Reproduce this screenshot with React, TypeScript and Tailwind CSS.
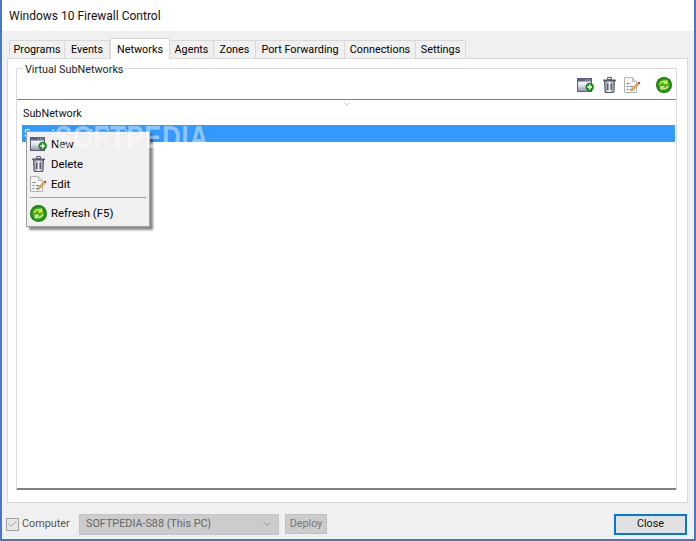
import { useId } from "react";
import { ChevronDown, Check } from "lucide-react";

const font = "font-['Roboto',sans-serif]";

function NewIcon({ className }: { className?: string }) {
  const id = useId();
  return (
    <svg viewBox="0 0 17 16" className={className}>
      <defs>
        <linearGradient id={id} x1="0" y1="0" x2="0" y2="1">
          <stop offset="0" stopColor="#ffffff" />
          <stop offset="0.5" stopColor="#e6e6ee" />
          <stop offset="1" stopColor="#8c8cb0" />
        </linearGradient>
      </defs>
      <rect x="0.5" y="1.5" width="14" height="13" fill={`url(#${id})`} stroke="#5c5c7c" />
      <rect x="1" y="2" width="13" height="2.5" fill="#5c6280" />
      <path d="M8 3h1M10 3h1M12 3h1" stroke="#c8cce0" />
      <circle cx="12.700" cy="10" r="4.200" fill="#128a12" />
      <path d="M12.700 7.600v4.800M10.300 10h4.800" stroke="#fff" strokeWidth="1.700" />
    </svg>
  );
}

function TrashIcon({ className }: { className?: string }) {
  const id = useId();
  return (
    <svg viewBox="0 0 13 16" className={className}>
      <defs>
        <linearGradient id={id} x1="0" y1="0" x2="1" y2="0">
          <stop offset="0" stopColor="#8a8a9a" />
          <stop offset="0.5" stopColor="#f0f0f4" />
          <stop offset="1" stopColor="#8a8a9a" />
        </linearGradient>
      </defs>
      <path d="M4.500 .5h4v2h-4z" fill="none" stroke="#5a5a70" />
      <rect x="0" y="2.500" width="13" height="1.500" fill="#5a5a70" />
      <path d="M1.500 4h10l-.6 11.500h-8.800z" fill={`url(#${id})`} stroke="#5a5a70" />
      <path d="M4.700 6.500v6.500M8.300 6.500v6.500" stroke="#5a5a70" strokeWidth="1.500" />
    </svg>
  );
}

function EditIcon({ className }: { className?: string }) {
  return (
    <svg viewBox="0 0 17 16" className={className}>
      <path d="M.5.5h8l4 4v11h-12z" fill="#f6f6f6" stroke="#b4b4b4" />
      <path d="M8.500.5v4h4" fill="#e4e4e4" stroke="#b4b4b4" />
      <path d="M2.500 6.500h3M2.500 9.500h2M2.500 12.500h2M6 9.500h3M6 12.500h1" stroke="#77778a" />
      <path d="M7 14l1-2.500 5-5 1.500 1.500-5 5z" fill="#e8b04a" stroke="#9a6a2a" strokeWidth=".5" />
      <path d="M13.500 6l1.500-1.500 1.500 1.500-1.500 1.500z" fill="#c02828" />
    </svg>
  );
}

function RefreshIcon({ className }: { className?: string }) {
  const id = useId();
  return (
    <svg viewBox="0 0 16 16" className={className}>
      <defs>
        <radialGradient id={id}>
          <stop offset="0" stopColor="#4fb81e" />
          <stop offset="0.7" stopColor="#33a018" />
          <stop offset="1" stopColor="#0f6e14" />
        </radialGradient>
      </defs>
      <circle cx="8" cy="8" r="8" fill={`url(#${id})`} />
      <path d="M3.200 7.500C3.600 4.500 7 2.700 10 3.800l1.300-1.300.5 4.800-4.600-.5 1.300-1.300C6.500 4.800 5 5.800 4.800 7.500z" fill="#dcec4a" />
      <path d="M12.800 8.500c-.4 3-3.800 4.800-6.800 3.700l-1.300 1.300-.5-4.800 4.600.5-1.300 1.300c1.800.7 3.300-.3 3.500-2z" fill="#cfe98a" />
    </svg>
  );
}

const tabs = ["Programs", "Events", "Networks", "Agents", "Zones", "Port Forwarding", "Connections", "Settings"];
const tabWidths: Record<string, string> = {
  Programs: "w-[56px]",
  Events: "w-[45px]",
  Networks: "w-[60px]",
  Agents: "w-[44px]",
  Zones: "w-[42px]",
  "Port Forwarding": "w-[89px]",
  Connections: "w-[71px]",
  Settings: "w-[50px]",
};

export default function App() {
  return (
    <div className={`${font} w-[696px] h-[541px] flex flex-col overflow-hidden bg-[#f0f0f0] border-x-2 border-b-2 border-[#4a78c0] text-[10.8px] text-black`}>
      <div className="h-[31px] -mx-[2px] px-[9px] bg-white flex items-center text-[12px] text-[#111]">Windows 10 Firewall Control</div>

      <div className="ml-[5px] mr-[6px] mt-[7px] flex-1 flex flex-col min-h-0">
        <div className="flex items-end h-[20px] pl-[2px]">
          {tabs.map((t) => (
            t === "Networks" ? (
              <div key={t} className={`${tabWidths[t]} h-[21px] -mb-px relative z-10 bg-white border border-b-0 border-[#d9d9d9] flex justify-center pt-[3px]`}>{t}</div>
            ) : (
              <div key={t} className={`${tabWidths[t]} h-[18px] pt-[2px] bg-[#f0f0f0] border border-l-0 first:border-l border-b-0 border-[#d9d9d9] flex items-center justify-center`}>{t}</div>
            )
          ))}
        </div>

        <div className="h-[445px] bg-white border border-[#d9d9d9] pt-[9px] pb-[12px] pl-[8px] pr-[10px] flex flex-col">
          <div className="relative flex-1 flex flex-col border-l border-r border-t border-[#d9d9d9]">
            <div className="absolute -top-[7px] left-[6px] bg-white px-[2px] pt-[1px] leading-[14px] text-[#222]">Virtual SubNetworks</div>
            <div className="h-[30px] flex items-end justify-end gap-[9px] pr-[4px] pb-[6px] shrink-0">
              <NewIcon className="w-[17px] h-[16px]" />
              <TrashIcon className="w-[13px] h-[16px]" />
              <EditIcon className="w-[17px] h-[16px] -ml-px" />
              <RefreshIcon className="w-[16px] h-[16px] ml-[6px]" />
            </div>
            <div className="relative flex-1 border-t border-b-2 border-[#808080] pl-[5px] pr-px flex flex-col">
              <ChevronDown className="absolute left-[323px] -top-[1px] w-[14px] h-[10px] text-[#888]" strokeWidth={1.2} />
              <div className="h-[25px] flex items-center pl-[1px] pt-[4px] text-[#111]">SubNetwork</div>
              <div className="h-[17px] bg-[#3399ff] border border-dotted border-[#c08040] text-white leading-[15px] pl-px">Sample virtual subnet</div>
              <div className="absolute top-[31px] left-[9px] w-[124px] h-[96px] bg-[#f0f0f0] border border-[#a0a0a0] shadow-[3px_3px_2px_rgba(0,0,0,0.45)] flex flex-col pt-[2px] pl-[3px] pr-[3px] text-[11.4px]">
                <div className="h-[20px] flex items-center gap-[4px]"><NewIcon className="w-[17px] h-[16px]" /><span className="pt-[2px]">New</span></div>
                <div className="h-[20px] flex items-center gap-[4px]"><span className="w-[17px] flex justify-center"><TrashIcon className="w-[13px] h-[16px]" /></span><span className="pt-[2px]">Delete</span></div>
                <div className="h-[20px] flex items-center gap-[4px]"><EditIcon className="w-[17px] h-[16px]" /><span className="pt-[2px]">Edit</span></div>
                <div className="h-px bg-[#a0a0a0] mt-[3px] mb-[5px]" />
                <div className="h-[20px] flex items-center gap-[4px]"><RefreshIcon className="w-[17px] h-[17px]" /><span className="pt-[2px]">Refresh (F5)</span></div>
              </div>
              <div className="absolute top-[23px] left-[38px] origin-left scale-x-[0.8] text-[32px] leading-[28px] font-bold tracking-[1px] text-white/45 font-['Liberation_Sans',sans-serif] pointer-events-none">SOFTPEDIA</div>
            </div>
          </div>
        </div>

        <div className="flex-1 flex items-center pt-[6px] relative -left-[1px] text-[#555]">
          <div className="w-[13px] h-[13px] border border-[#a0a0a0] bg-[#e8e8e8] flex items-center justify-center"><Check className="w-[12px] h-[12px] text-[#999]" strokeWidth={2} /></div>
          <span className="ml-[3px] w-[47px]">Computer</span>
          <div className="ml-[10px] w-[200px] h-[21px] bg-[#cccccc] border border-[#c4c4c4] flex items-center justify-between pl-[6px] pr-[5px] text-[#666]">
            <span>SOFTPEDIA-S88 (This PC)</span>
            <ChevronDown className="w-[12px] h-[12px] text-[#999]" />
          </div>
          <div className="ml-[6px] w-[42px] h-[20px] bg-[#cccccc] border border-[#bfbfbf] flex items-center justify-center text-[#777]">Deploy</div>
          <div className="ml-auto w-[73px] h-[21px] bg-[#e1e1e1] border-2 border-[#0078d7] flex items-center justify-center text-[#111]">Close</div>
        </div>
      </div>
    </div>
  );
}
